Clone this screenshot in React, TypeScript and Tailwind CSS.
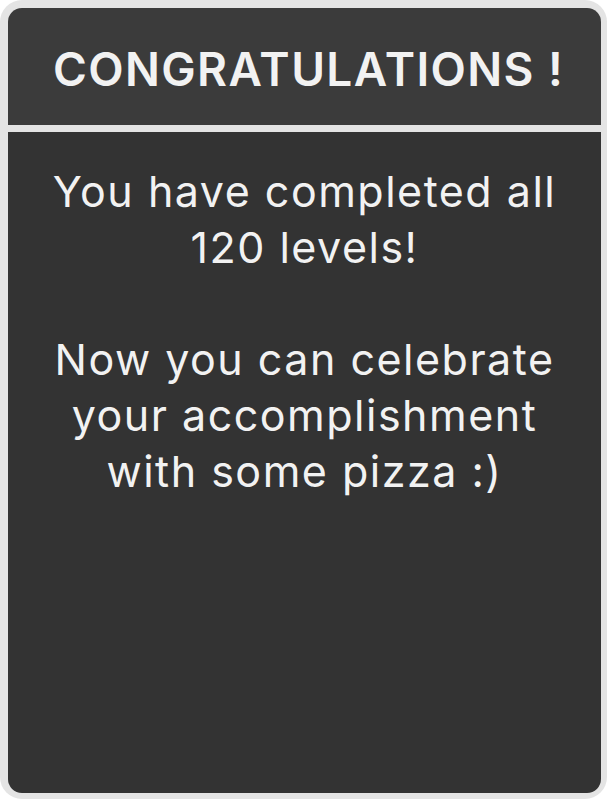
export default function App() {
  return (
    <div className="w-[610px] h-[804px] bg-white" style={{ fontFamily: "Inter, 'Noto Sans', sans-serif" }}>
      <div className="w-[607px] h-[799px] bg-[#e4e4e4] rounded-[22px] pt-2 pl-2 pr-[6px] pb-[6px] flex flex-col gap-[7px]">
        <div className="h-[117px] shrink-0 bg-[#3b3b3b] rounded-t-[14px] flex items-center justify-center">
          <h1 className="text-[46px] font-semibold text-[#f2f2f2] leading-none tracking-[1.4px] pt-1 pl-2">
            CONGRATULATIONS !
          </h1>
        </div>
        <div className="flex-1 bg-[#333333] rounded-b-[14px] px-6 pt-[31px] text-center text-[#f2f2f2] text-[43px] leading-[56px] tracking-[1.5px]">
          <p>
            You have completed all 120 levels!
            <br />
            <br />
            Now you can celebrate your accomplishment with some pizza :)
          </p>
        </div>
      </div>
    </div>
  );
}
